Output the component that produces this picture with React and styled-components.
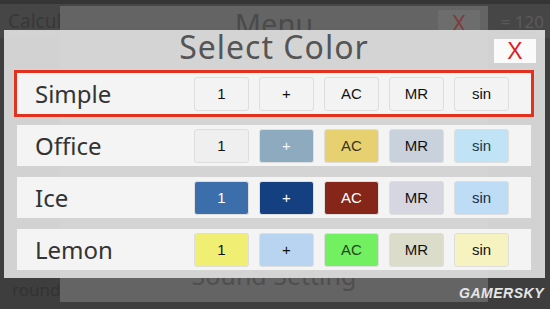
import React from "react";
import styled, { createGlobalStyle } from "styled-components";

const Global = createGlobalStyle`
  html, body { margin: 0; padding: 0; }
  body {
    width: 550px;
    height: 309px;
    overflow: hidden;
    background: #3d3d3d;
    font-family: "Noto Sans", "DejaVu Sans", sans-serif;
  }
`

const Screen = styled.div`
  position: relative;
  width: 550px;
  height: 309px;
  background: #3e3e3e;
  overflow: hidden;
`

const AppBar = styled.div`
  display: flex;
  justify-content: space-between;
  align-items: center;
  height: 34px;
  padding: 0 6px 0 8px;
  border-top: 4px solid #353535;
  background: #464646;
`

const AppTitle = styled.span`
  font-size: 19px;
  color: #383838;
`

const AppValue = styled.span`
  font-size: 17px;
  color: #5b5b5b;
`

const Footer = styled.div`
  position: absolute;
  left: 12px;
  bottom: 8px;
  font-size: 17px;
  color: #333;
`

// the menu window that sits behind the colour picker
const MenuWindow = styled.div`
  position: absolute;
  left: 60px;
  top: 6px;
  width: 428px;
  height: 296px;
  box-sizing: border-box;
  padding-bottom: 12px;
  background: #646464;
  display: flex;
  flex-direction: column;
  align-items: center;
  justify-content: space-between;
`

const MenuHead = styled.div`
  position: relative;
  width: 100%;
  height: 34px;
  display: flex;
  justify-content: center;
  align-items: center;
`

const MenuTitle = styled.span`
  font-size: 29px;
  color: #4a4a4a;
`

const MenuClose = styled.span`
  position: absolute;
  right: 8px;
  top: 4px;
  width: 42px;
  height: 24px;
  background: #6d6d6d;
  color: #7e3c3c;
  font-size: 22px;
  line-height: 24px;
  text-align: center;
`

const MenuItem = styled.span`
  font-size: 25px;
  line-height: 30px;
  color: #4f4f4f;
`

const Dialog = styled.div`
  position: absolute;
  left: 4px;
  top: 30px;
  width: 541px;
  height: 248px;
  box-sizing: border-box;
  padding: 0 14px 0 13px;
  background: rgba(217, 217, 217, 0.96);
  display: flex;
  flex-direction: column;
`

const Head = styled.div`
  position: relative;
  height: 43px;
  display: flex;
  justify-content: center;
`

const Title = styled.h1`
  margin: 0;
  font-size: 32px;
  font-weight: 400;
  letter-spacing: 1px;
  line-height: 34px;
  color: #555;
`

const Close = styled.button`
  position: absolute;
  right: -5px;
  top: 9px;
  width: 42px;
  height: 24px;
  padding: 0;
  border: none;
  background: #fafafa;
  color: #e01d1d;
  font-family: "Liberation Sans", Arial, sans-serif;
  font-size: 23px;
  line-height: 24px;
`

const Rows = styled.div`
  display: flex;
  flex-direction: column;
  gap: 11px;
`

const Row = styled.div`
  display: flex;
  align-items: center;
  height: 41px;
  background: #f4f4f4;
  outline: ${(p) => (p.selected ? "3px solid #e2311f" : "none")};
`

const Label = styled.span`
  width: 159px;
  padding-left: 18px;
  font-size: 24px;
  color: #333;
`

const Keys = styled.div`
  display: flex;
  gap: 10px;
`

const Key = styled.div`
  width: 55px;
  height: 34px;
  box-sizing: border-box;
  display: flex;
  align-items: center;
  justify-content: center;
  border: 1px solid #dedede;
  border-radius: 3px;
  background: ${(p) => p.bg};
  color: ${(p) => p.fg};
  font-family: "Liberation Sans", Arial, sans-serif;
  font-size: 15px;
`

const Mark = styled.div`
  position: absolute;
  right: 6px;
  bottom: 8px;
  font-family: "Liberation Sans", Arial, sans-serif;
  font-weight: 700;
  font-style: italic;
  font-size: 14px;
  letter-spacing: 0.5px;
  color: #e6e6e6;
`

const labels = ["1", "+", "AC", "MR", "sin"];

const themes = [
  {
    name: "Simple",
    selected: true,
    keys: [
      ["#f3f3f3", "#111"],
      ["#f3f3f3", "#111"],
      ["#f3f3f3", "#111"],
      ["#f3f3f3", "#111"],
      ["#f3f3f3", "#111"],
    ],
  },
  {
    name: "Office",
    keys: [
      ["#efefef", "#111"],
      ["#8eaabf", "#f4f7fa"],
      ["#e7d070", "#3a3520"],
      ["#c9d1dc", "#111"],
      ["#c0e4f5", "#1c3a48"],
    ],
  },
  {
    name: "Ice",
    keys: [
      ["#3b6eab", "#fff"],
      ["#143f80", "#fff"],
      ["#862618", "#fff"],
      ["#d6d6e0", "#111"],
      ["#bedcf5", "#1c2c48"],
    ],
  },
  {
    name: "Lemon",
    keys: [
      ["#f1ee74", "#111"],
      ["#b9d4f1", "#111"],
      ["#73ef62", "#1c4a1c"],
      ["#dcdccb", "#111"],
      ["#f7f3c1", "#111"],
    ],
  },
];

export default function App() {
  return (
    <>
      <Global />
      <Screen>
        <AppBar>
          <AppTitle>Calculator</AppTitle>
          <AppValue>= 120</AppValue>
        </AppBar>
        <Footer>round</Footer>

        <MenuWindow>
          <MenuHead>
            <MenuTitle>Menu</MenuTitle>
            <MenuClose>X</MenuClose>
          </MenuHead>
          <MenuItem>Sound Setting</MenuItem>
        </MenuWindow>

        <Dialog>
          <Head>
            <Title>Select Color</Title>
            <Close>X</Close>
          </Head>
          <Rows>
            {themes.map((t) => (
              <Row key={t.name} selected={t.selected}>
                <Label>{t.name}</Label>
                <Keys>
                  {t.keys.map(([bg, fg], i) => (
                    <Key key={labels[i]} bg={bg} fg={fg}>
                      {labels[i]}
                    </Key>
                  ))}
                </Keys>
              </Row>
            ))}
          </Rows>
        </Dialog>

        <Mark>GAMERSKY</Mark>
      </Screen>
    </>
  );
}
